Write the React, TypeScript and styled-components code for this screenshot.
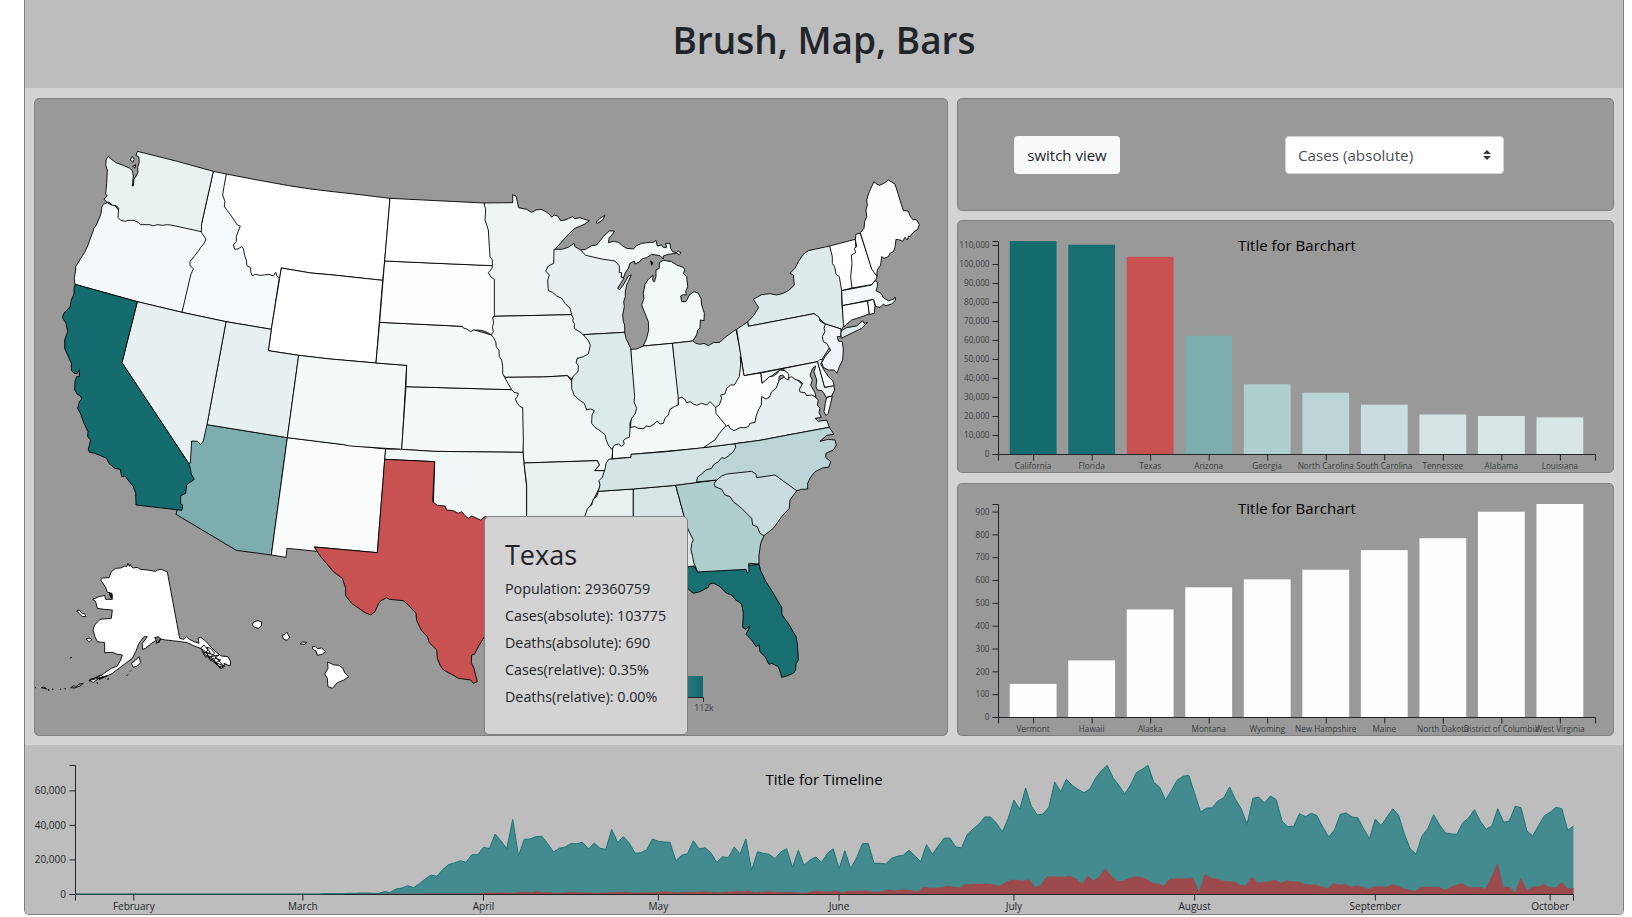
import React from 'react';
import styled, { createGlobalStyle } from 'styled-components';

const GlobalStyle = createGlobalStyle`
  * { box-sizing: border-box; }
  body {
    margin: 0;
    background: #fff;
    color: #212529;
    font-family: 'Open Sans', 'Noto Sans', sans-serif;
    font-size: 15px;
    overflow: hidden;
  }
  svg { display: block; }
`;

const Page = styled.div`
  width: 1600px;
  height: 915px;
  margin-left: 24px;
  display: flex;
  flex-direction: column;
  background: #d3d3d3;
  border: 1px solid #808080;
  border-top: 0;
  border-radius: 0 0 5px 5px;
  overflow: hidden;
`;

const Header = styled.header`
  height: 88px;
  flex: none;
  display: flex;
  justify-content: center;
  background: #bdbdbd;
`;

const Heading = styled.h1`
  margin: 14px 0 0;
  font-size: 37px;
  line-height: 52px;
  font-weight: 600;
  white-space: nowrap;
`;

const Main = styled.main`
  height: 657px;
  flex: none;
  display: grid;
  grid-template-columns: 914px 657px;
  column-gap: 9px;
  padding: 10px 9px 9px;
`;

const Column = styled.div`
  display: grid;
  grid-template-rows: 112px 253px 253px;
  row-gap: 10px;
`;

const Panel = styled.section`
  position: relative;
  background: #999;
  border: 1px solid #808080;
  border-radius: 5px;
`;

const Controls = styled(Panel)`
  display: flex;
  align-items: center;
  justify-content: space-between;
  margin-bottom: -1px;
  padding: 1px 109px 0 56px;
`;

const SwitchButton = styled.button`
  width: 106px;
  height: 38px;
  border: 0;
  border-radius: 4px;
  background: #f8f9fa;
  color: #212529;
  font: 400 15px 'Open Sans', sans-serif;
  padding: 0 0 1px;
  white-space: nowrap;
`;

const SelectBox = styled.div`
  width: 219px;
  height: 38px;
  display: flex;
  align-items: center;
  justify-content: space-between;
  padding: 0 12px 1px;
  border: 1px solid #ced4da;
  border-radius: 4px;
  background: #fff;
  color: #495057;
  font-size: 15.2px;
  white-space: nowrap;
`;

const Tooltip = styled.aside`
  position: absolute;
  left: 449px;
  top: 417px;
  width: 204px;
  height: 219px;
  padding: 21px 20px;
  background: #d3d3d3;
  border: 1px solid #808080;
  border-radius: 5px;
  white-space: nowrap;
`;

const TooltipTitle = styled.h3`
  margin: 0 0 3px;
  font-size: 27px;
  line-height: 34px;
  font-weight: 400;
`;

const TooltipLine = styled.p`
  margin: 0;
  font-size: 14.3px;
  line-height: 27px;
`;

const Timeline = styled.section`
  flex: 1;
  background: #bdbdbd;
`;

const ChartTitle = styled.text`
  font-size: 15px;
  fill: #000;
  text-anchor: middle;
`;

const TickLabel = styled.text<{ $size?: number; $end?: boolean; $dark?: boolean }>`
  font-size: ${p => p.$size ?? 8.2}px;
  text-anchor: ${p => (p.$end ? 'end' : 'middle')};
  fill: ${p => (p.$dark ? '#212529' : '#3b3f43')};
`;

const Axis = styled.path`
  fill: none;
  stroke: #212529;
  stroke-width: 1;
`;

const State = styled.path`
  stroke: #000;
  stroke-width: 2.7;
  stroke-linejoin: round;
`;

/* ---- map geometry: every outline is a list of runs on local map sheets ---- */

type Sheet = [number, number];
type Run = [Sheet, string];
type Shape = [string, ...Run[]];

const NW: Sheet = [0, 0];
const SW: Sheet = [0, 750];
const AK: Sheet = [0, 1350];
const N: Sheet = [918, 270];
const S: Sheet = [828, 990];
const LK: Sheet = [1488, 300];
const NE: Sheet = [1968, 210];
const SE: Sheet = [1608, 930];

const outline = (runs: Run[]) =>
  'M' +
  runs
    .map(([[ox, oy], pts]) =>
      pts
        .split(' ')
        .map(p => {
          const [x, y] = p.split(',').map(Number);
          return `${x + ox},${y + oy}`;
        })
        .join('L'),
    )
    .join('L') +
  'Z';

const states: Shape[] = [
  // Idaho, Oregon, Washington
  ['#f7fafc', [NW, '568,244 607,252 650,330 700,530 768,550 766,563 742,718 606,695 474,667 480,560 488,500 520,440 533,400']],
  ['#f6f9fb', [NW, '238,343 250,338 262,345 270,342 290,370 530,420 534,430 546,447 541,459 530,472 524,482 512,497 498,515 498,527 508,536 500,555 474,667 340,635 153,583 151,565 155,540 155,530 163,517 182,487 191,468 200,443 210,415 217,405 230,375 234,350']],
  ['#e9f2f1', [NW, '340,184 460,214 568,244 533,400 532,425 440,405 430,404 415,406 402,404 388,407 375,404 349,404 343,397 330,391 312,391 304,394 290,391 282,382 284,355 277,347 265,346 258,338 246,335 240,327 250,318 245,312 248,280 250,240 245,225 247,207 254,199 262,208 278,219 298,226 316,234 325,242 328,258 325,288 328,287 330,268 336,258 342,247 341,232 346,215 344,200 336,197']],
  ['#e9f2f1', [NW, '325,199 331,208 326,217 319,210']],
  ['#e9f2f1', [NW, '326,229 335,224 333,235']],
  // Montana, Wyoming
  ['#fff', [NW, '607,252 700,270 800,288 860,297'], [N, '0,34 90,44 180,55 164,243 158,301 0,284'], [NW, '860,549 772,534 767,565 759,558 755,547 748,558 735,553 722,555 708,556 695,553 684,557 680,545 680,533 669,527 667,510 662,497 658,475 652,470 642,477 632,478 628,465 637,455 637,440 642,425 649,408 640,405 630,390 620,375 610,362 601,350 603,335 596,315 600,290']],
  ['#fff', [NW, '772,534 860,549'], [N, '0,284 158,301 138,549 0,537'], [SW, '824,46 733,32'], [NW, '742,718']],
  // Arizona, Utah, Nevada, California
  ['#7eadaf', [SW, '549,254 790,293 742,645 637,631 456,523 460,508 470,500 460,460 480,380 495,295']],
  ['#e7f0f1', [NW, '606,695 742,718'], [SW, '733,32 824,46 790,293 549,254']],
  ['#e7eff0', [NW, '340,635 474,667 606,695'], [SW, '549,254 538,303 530,314 520,304 503,303 499,370 494,370 294,68']],
  ['#146c6f', [NW, '153,583 340,635'], [SW, '294,68 494,370 499,385 502,403 511,418 498,427 488,435 485,460 470,467 470,492 476,495 474,511 336,495 335,460 328,440 316,425 303,408 293,410 289,388 272,385 255,370 248,355 230,347 212,340 196,336 193,328 200,300 191,290 192,275 180,250 170,222 161,205 166,185 173,177 170,168 160,163 152,150 153,125 158,110 166,110 166,90 160,100 150,100 142,90 142,70 133,50 122,25 122,0'], [NW, '124,745 131,725 126,700 115,682 120,670 138,650 142,630 150,612 150,595']],
  // New Mexico, Colorado
  ['#fafcfb', [SW, '790,293 960,314'], [S, '257,87 232,398 43,381 52,394'], [SW, '789,625 786,652 742,645']],
  ['#f4f9fa', [SW, '824,46'], [N, '0,537 138,549 230,556 217,780'], [S, '305,88 257,85 150,78'], [SW, '960,314 790,293']],
  // Minnesota, Iowa, Missouri
  ['#eef4f4', [N, '462,69 548,68 548,44 558,48 562,65 566,83 590,88 605,97 618,90 633,88 648,95 660,105 665,112 672,105 683,108 692,122 705,120 715,116 727,110 735,116 750,113 765,118 778,122 765,132 735,145 715,163 676,207 680,300 730,404 489,409 480,409 465,280 475,200 455,100']],
  ['#f0f5f6', [N, '489,409 724,404 790,470 770,580 727,598 712,587 640,591 524,592 500,560 480,465']],
  ['#f0f5f6', [N, '524,592 640,591 712,587 722,600 770,610 830,710'], [S, '940,80 935,120 914,152 884,152 898,135 892,122 672,129 669,97'], [N, '575,700 550,655 530,610']],
  // Kansas, Nebraska, Dakotas
  ['#f5f9fa', [N, '228,620 545,629 552,637 565,640 562,650 556,657 562,670 570,680 578,683 580,780'], [S, '669,97 400,94 305,88']],
  ['#f5f9fa', [N, '149,427 397,439 484,465 490,472 497,485 499,500 507,512 508,530 515,540 518,560 518,580 524,592 535,612 545,629 228,620 230,556 138,549']],
  ['#fdfefe', [N, '164,243 487,257 486,265 475,278 482,290 493,298 493,409 488,412 491,430 487,440 490,455 484,465 472,457 455,451 430,450 422,455 410,447 400,444 397,439 149,427']],
  ['#fff', [N, '180,55 320,62 462,69 467,90 465,120 475,150 478,200 480,230 487,240 487,257 320,250 164,243']],
  // Michigan and Wisconsin
  ['#f2f7f8', [LK, '182,180 197,178 215,167 230,165 250,140 268,123 283,123 276,135 268,142 265,158 280,154 296,157 308,168 320,175 340,177 350,167 365,160 390,157 400,157 408,151 412,168 425,165 430,172 440,172 437,160 450,160 452,175 458,185 470,188 475,183 483,188 478,194 470,190 445,193 430,198 430,207 420,197 395,193 380,203 365,207 360,215 345,222 343,213 330,220 325,235 315,250 310,265 290,255 270,225 190,200']],
  ['#f2f7f8', [LK, '370,468 457,460 518,453 530,435 533,420 540,415 541,390 552,392 553,370 545,345 543,325 535,310 522,305 508,315 498,335 485,335 482,318 490,314 499,315 497,305 503,290 500,260 490,250 495,240 490,232 470,225 455,215 430,211 418,218 418,235 408,240 408,260 403,276 398,270 399,255 385,268 375,283 370,310 372,325 365,345 375,370 385,395 386,420 380,445']],
  ['#eee', [LK, '228,97 240,85 254,76 250,88 233,100']],
  ['#222', [LK, '392,213 398,218 395,226']],
  ['#e7eff0', [LK, '182,180 197,196 245,207 285,213 298,228 298,248 305,248 304,262 312,265 302,280 293,295 299,299 310,285 325,258 334,255 325,275 320,285 316,305 316,320 311,335 313,350 308,375 310,395 314,405 314,427 190,434 183,428 163,415 163,400 158,393 160,385 155,374 150,355 135,340 125,325 110,318 98,307 85,302 83,270 88,255 77,243 85,228 101,220 102,178 125,178 145,172 162,160 165,170']],
  // Oklahoma, Arkansas
  ['#f0f5f6', [S, '257,87 305,88 400,94 669,97 672,129 680,200 680,320 560,320 400,260 404,125 254,118']],
  ['#e8f0f0', [S, '672,129 892,122 898,135 884,152 916,152 900,200 855,290 855,330 680,330 680,195']],
  // Ohio valley
  ['#deebea', [LK, '457,460 518,453 528,460 540,463 552,460 565,467 580,458 600,457 615,442 648,418 664,500 668,560 630,620 590,665 475,650']],
  ['#eef5f5', [LK, '332,478 350,477 370,468 457,460 475,625 475,660 430,715 330,730 340,600']],
  ['#f5f9fa', [LK, '277,806 278,770 290,755 330,712 345,710 355,715 372,716 378,708 390,710 402,702 412,693 420,702 430,700 435,685 445,675 450,658 463,650 475,645 475,625 485,622 495,628 500,638 510,635 520,642 530,646 545,640 560,645 570,635 580,645 590,655 605,680 635,705 610,730 590,750 570,768 550,774 334,793 334,802']],
  ['#dceae9', [LK, '190,434 314,427 318,445 332,475 344,620 342,635 350,655 345,672 335,685 330,700 330,720 328,742 318,745 310,752 313,762 305,769 295,762 284,765 275,778 265,765 258,748 256,735 240,722 225,712 215,700 216,675 223,662 212,657 200,660 193,640 178,630 162,615 155,595 155,570 160,558 174,545 175,528 169,518 171,505 190,500 205,492 211,465 205,452']],
  // South
  ['#e8f0f0', [SE, '115,274 220,267 220,400 80,400 75,347 83,325 95,315 100,297 110,290']],
  ['#d7e6e5', [SE, '220,267 347,256 372,347 410,430 405,516 340,520 220,520']],
  ['#d5e4e4', [SE, '146,178 213,172 213,163 320,155 430,143 525,131 545,150 440,245 347,256 220,267 115,274 120,255 117,242 127,232 130,222 135,208 138,190']],
  ['#187073', [SE, '340,505 402,498 413,516 540,500 597,492 602,512 618,545 640,580 665,622 666,645 685,670 708,710 712,730 715,780 708,792 707,810 700,820 680,828 665,832 662,820 655,800 635,790 627,793 615,770 600,755 597,735 588,740 575,720 558,703 565,690 570,677 557,688 548,682 550,640 545,612 525,598 515,585 500,580 480,560 460,549 448,553 445,562 420,575 400,580 384,566 300,560']],
  ['#b1cece', [SE, '347,256 470,240 560,300 612,407 602,430 597,465 597,492 566,490 567,515 562,519 558,508 413,516 402,490 398,470 393,450 395,430 400,420 385,390 372,347']],
  // Atlantic coast
  ['#e7eff0', [SE, '430,143 525,131 600,121 700,102 808,82'], [NE, '440,780 415,784 405,775 424,772 417,758 420,745 412,735 415,720 405,710 385,690 330,640 250,690 200,780 140,795 118,820 105,840']],
  ['#f2f7f8', [NE, '440,712 457,708 452,730 445,760 438,767 432,755 436,730']],
  ['#deebea', [NE, '203,486 222,465 236,443 228,430 220,418 245,404 270,401 290,405 310,400 328,390 343,375 340,345 330,340 345,325 355,305 370,283 385,272 449,258 490,330 485,395 486,437 492,495 488,503 484,510 483,507 436,492 402,461 205,499']],
  ['#deebea', [NE, '484,512 500,503 530,498 548,482 552,490 563,487 545,505 510,522 484,535 482,520']],
  ['#e7eff0', [NE, '170,508 203,486 205,499 402,461 417,471 420,483 436,492 450,560 425,600 413,605 192,647']],
  ['#f0f4f8', [NE, '436,492 483,507 482,530 472,530 475,543 487,545 490,570 488,600 478,620 471,640 462,630 445,630 430,622 425,608 435,590 452,570 440,550 430,545 427,530 435,515 432,505']],
  ['#eef4f4', [NE, '242,639 413,605 434,682 462,677 464,690 455,708 438,712 432,700 425,692 412,690 408,680 410,660 402,635 407,618 398,625 390,645 397,660 392,675 405,698 408,712 395,705 380,707 375,698 360,696 358,688 368,670 358,662 345,658 335,650 325,655 310,625 292,635 246,670']],
  ['#fdfefe', [NE, '413,605 420,598 428,600 422,612 432,630 445,650 458,662 463,677 434,682']],
  ['#fdfefe', [NE, '181,590 184,600 192,647 242,639 246,670 258,660 268,650 280,648 292,640 300,630 315,632 326,642 326,660 318,657 308,645 298,648 296,665 288,685 275,695 268,712 258,717 245,710 244,735 235,750 228,770 225,787 210,790 205,800 195,803 180,803 162,812 150,805 145,795 140,799 120,775 108,760 107,742 118,735 125,715 122,705 135,702 140,685 152,675 163,675 178,650 182,615']],
  ['#fff', [NE, '449,258 526,238 530,300 516,384 485,392 478,350 468,342 464,320 457,310 457,290']],
  ['#fff', [NE, '526,238 528,222 541,220 575,325 592,345 588,358 575,374 516,384 512,350 516,310 514,285 527,278 523,265 530,260']],
  ['#fdfefe', [NE, '541,218 552,205 554,185 560,170 558,150 562,135 560,120 568,95 582,65 590,72 598,76 612,70 625,60 645,72 670,152 685,153 690,168 700,180 708,178 718,193 713,208 700,217 690,230 686,228 682,240 675,232 668,244 660,240 648,238 645,262 640,275 630,280 625,290 612,295 605,290 602,315 592,330 590,348 575,327']],
  ['#f4f8fa', [NE, '485,392 575,375 585,362 592,365 592,380 588,392 603,400 610,413 625,422 640,418 645,411 647,420 635,432 618,437 610,433 600,442 588,440 580,418 487,437']],
  ['#fdfefe', [NE, '487,437 563,423 568,462 540,472 515,480 492,500 490,490']],
  ['#fdfefe', [NE, '563,423 580,418 585,437 583,460 568,463']],
  ['#bbd5d6', [SE, '410,246 412,232 425,222 438,210 455,205 460,195 475,185 485,173 495,175 505,168 520,155 527,143 525,131 600,121 700,102 808,82 822,103 800,106 780,124 805,118 825,120 829,135 820,150 798,160 797,172 812,185 806,202 790,203 765,215 750,235 743,250 743,267 725,268 710,272 640,290 470,250 470,240']],
  ['#cadcdf', [SE, '470,240 485,228 500,222 575,214 588,222 590,233 645,225 710,272 690,300 688,325 665,350 640,385 612,407 600,400 592,380 578,375 575,355 545,325 520,305 510,290 495,285 485,268 465,260 463,250']],
  // Texas
  ['#c85151', [S, '254,118 404,125 398,245 412,256 435,258 440,270 460,272 475,280 485,275 495,287 505,295 515,288 535,297 542,300 555,290 600,300 600,600 552,652 535,680 523,703 515,705 514,728 522,745 532,785 520,790 512,780 475,775 455,763 430,750 420,735 412,715 410,690 400,680 388,668 382,650 365,632 350,602 348,580 325,555 310,542 268,538 260,533 243,542 235,552 225,575 212,585 195,578 155,550 137,527 137,505 127,475 100,455 75,425 62,410 43,381 232,398']],
  // Alaska
  ['#fff', [AK, '230,120 235,114 255,113 262,95 275,85 290,84 303,78 308,80 312,70 316,79 319,73 322,80 328,84 340,82 350,88 370,90 395,94 400,90 412,88 430,96 467,295 480,298 487,290 496,298 510,305 525,310 522,295 530,292 545,303 560,320 575,335 592,348 612,350 620,365 618,378 600,370 602,380 590,386 575,370 560,350 545,345 530,325 510,318 490,308 470,305 445,302 425,300 410,297 405,308 395,302 380,312 365,325 355,328 355,310 370,290 360,290 345,310 335,335 325,355 305,370 285,385 265,400 245,410 225,415 208,427 195,422 200,417 222,412 240,400 262,385 280,378 290,360 295,345 280,343 265,337 242,338 242,308 220,305 213,290 207,270 212,255 228,238 262,235 265,210 240,208 220,205 215,185 206,178 225,170 242,166 245,178 265,178 264,160 250,157 245,142']],
  ['#fff', [AK, '158,213 166,210 172,218 183,223 186,229 175,230']],
  ['#fff', [AK, '186,297 198,294 204,299 196,306']],
  ['#fff', [AK, '322,370 333,362 345,350 350,368 340,378 328,382']],
  ['#777', [AK, '392,293 402,290 410,296 404,306 397,310 398,302']],
  ['none', [AK, '530,325 540,315 552,330 545,338 560,340 548,322 560,325 572,340 560,350 585,345 572,355 590,360 575,368 600,378 585,380 560,358 545,335']],
  ['none', [AK, '535,335 545,352 552,350 560,362 568,355 580,375 592,385 598,378 570,345']],
  ['#222', [AK, '256,157 265,166 262,175 258,168']],
  ['none', [AK, '195,422 220,410 230,405 240,412 225,418 250,407']],
  ['none', [AK, '140,443 150,437 155,441 165,432 178,430 168,438 152,444']],
  ['none', [AK, '52,443 60,441 68,447']],
  ['#222', [AK, '72,449 75,448 74,452']],
  ['#222', [AK, '84,448 88,448']],
  ['#222', [AK, '109,448 111,447']],
  ['#222', [AK, '122,446 125,446']],
  ['#222', [AK, '33,443 35,443']],
  ['#222', [AK, '139,354 143,352']],
  ['#222', [AK, '308,407 311,404']],
  ['#222', [AK, '319,394 321,392']],
  ['#222', [AK, '218,428 221,430']],
  ['#222', [AK, '250,418 255,416']],
  // Hawaii
  ['#fff', [AK, '685,254 690,245 702,242 713,246 712,258 703,265 690,261']],
  ['#fff', [AK, '774,286 782,284 789,277 797,293 789,301 779,298']],
  ['#fff', [AK, '829,312 835,306 848,307 843,313']],
  ['#fff', [AK, '865,320 873,319 880,326 893,324 905,335 895,343 880,346 876,333 867,328']],
  ['#fff', [AK, '911,366 930,375 945,376 957,385 962,398 974,410 960,420 940,428 925,445 912,440 910,415 902,402 912,385']],
];

const StateMap = () => (
  <svg width="912" height="636">
    <defs>
      <linearGradient id="scale" x1="0" x2="1">
        <stop offset="0" stopColor="#fff" />
        <stop offset="1" stopColor="#146c6f" />
      </linearGradient>
    </defs>
    <g transform="translate(-11 -9) scale(.33333)">
      {states.map(([fill, ...runs], i) => (
        <State key={i} fill={fill} d={outline(runs)} />
      ))}
    </g>
    <rect x="468" y="577" width="200" height="21" fill="url(#scale)" />
    <Axis d="M468.5 603V598.5H668.5V603" />
    <TickLabel $size={8.6} x="669" y="612">112k</TickLabel>
  </svg>
);

/* ---- bar charts ---- */

interface Bar {
  name: string;
  value: number;
  color?: string;
}

const mostCases: Bar[] = [
  { name: 'California', value: 112105, color: '#146c6f' },
  { name: 'Florida', value: 110150, color: '#187073' },
  { name: 'Texas', value: 103775, color: '#c85151' },
  { name: 'Arizona', value: 62260, color: '#7eadaf' },
  { name: 'Georgia', value: 36700, color: '#b1cece' },
  { name: 'North Carolina', value: 32260, color: '#bbd5d6' },
  { name: 'South Carolina', value: 25950, color: '#cadcdf' },
  { name: 'Tennessee', value: 20800, color: '#d5e4e4' },
  { name: 'Alabama', value: 20000, color: '#d7e6e5' },
  { name: 'Louisiana', value: 19300, color: '#d7e6e5' },
];

const fewestCases: Bar[] = [
  { name: 'Vermont', value: 145 },
  { name: 'Hawaii', value: 248 },
  { name: 'Alaska', value: 471 },
  { name: 'Montana', value: 568 },
  { name: 'Wyoming', value: 603 },
  { name: 'New Hampshire', value: 645 },
  { name: 'Maine', value: 731 },
  { name: 'North Dakota', value: 783 },
  { name: 'District of Columbia', value: 899 },
  { name: 'West Virginia', value: 933 },
];

const BarChart = ({ bars, max, step }: { bars: Bar[]; max: number; step: number }) => {
  const left = 40;
  const width = 597;
  const base = 233;
  const height = 213;
  const band = width / (bars.length + 0.2);
  const ticks = Array.from({ length: Math.floor(max / step) + 1 }, (_, i) => i * step);
  const y = (v: number) => base - (v / max) * height;
  return (
    <svg width="655" height="251">
      {bars.map((b, i) => (
        <rect
          key={b.name}
          x={left + band * (i + 0.2)}
          y={y(b.value)}
          width={band * 0.8}
          height={base - y(b.value)}
          fill={b.color ?? '#fdfefe'}
        />
      ))}
      <Axis d="M34.5 20.5H40.5V233.5H34.5" />
      <Axis d="M40.5 239.5V233.5H637.5V239.5" />
      {ticks.map(t => (
        <g key={t}>
          <Axis d={`M34.5 ${y(t) + 0.5}H40.5`} />
          <TickLabel $end x="31.5" y={y(t) + 3.3}>{t.toLocaleString('en-US')}</TickLabel>
        </g>
      ))}
      {bars.map((b, i) => (
        <g key={b.name}>
          <Axis d={`M${left + 0.5 + band * (i + 0.6)} 233.5V239.5`} />
          <TickLabel x={left + band * (i + 0.6)} y="248">{b.name}</TickLabel>
        </g>
      ))}
      <ChartTitle x="339" y="30">Title for Barchart</ChartTitle>
    </svg>
  );
};

/* ---- timeline: daily chart heights, in thirds of a pixel from the top ---- */

const cases = [
  ...Array(43).fill(462), 461, 461, 461, 461, 460, 460, 459, 459, 460, 460, 455, 457, 447, 444, 437, 443, 431, 417, 405, 409, 389, 374, 369, 362, 367,
  344, 344, 322, 326, 282, 303, 326, 238, 348, 298, 297, 290, 289, 311, 336, 325, 321, 311, 311, 307, 327, 309, 325, 328, 268, 307, 290, 309, 340, 338,
  329, 297, 304, 306, 307, 362, 346, 341, 302, 327, 323, 338, 367, 350, 353, 321, 342, 297, 391, 335, 340, 343, 356, 336, 326, 382, 331, 376, 360, 351,
  367, 340, 326, 386, 332, 386, 353, 311, 310, 370, 370, 372, 355, 349, 346, 331, 347, 365, 314, 343, 318, 295, 294, 320, 324, 283, 267, 252, 231, 231,
  249, 276, 236, 180, 208, 144, 199, 225, 222, 202, 126, 155, 118, 136, 148, 158, 148, 115, 92, 76, 113, 136, 162, 135, 98, 88, 76, 127, 142, 180,
  152, 121, 109, 106, 160, 216, 205, 203, 183, 173, 141, 178, 207, 253, 175, 171, 189, 168, 179, 244, 260, 259, 221, 230, 220, 227, 262, 291, 270, 223,
  219, 231, 233, 267, 296, 237, 257, 231, 206, 226, 283, 327, 342, 288, 266, 224, 254, 278, 282, 283, 248, 234, 209, 243, 268, 258, 206, 247, 243, 199,
  203, 273, 287, 257, 227, 217, 202, 206, 271, 258,
];

const deaths = [
  ...Array(60).fill(462), ...Array(10).fill(461), 459, 459, 459, 458, 459, 460, 457, 456, 458, 454, 458, 457, 460, 459, 458, 457, 458, 458, 459, 460,
  459, 458, 458, 457, 457, 458, 459, 458, 458, 458, 456, 455, 457, 458, 457, 457, 457, 455, 455, 457, 458, 457, 455, 454, 455, 452, 458, 457, 455, 455,
  457, 457, 457, 458, 460, 459, 454, 453, 455, 455, 452, 458, 454, 453, 453, 452, 455, 457, 454, 449, 452, 450, 450, 452, 455, 441, 445, 444, 443, 438,
  441, 444, 434, 433, 432, 432, 432, 434, 439, 427, 420, 421, 423, 419, 443, 435, 410, 410, 411, 411, 408, 417, 433, 408, 423, 410, 386, 409, 424, 424,
  415, 411, 412, 417, 430, 431, 438, 418, 416, 416, 416, 413, 459, 403, 414, 416, 422, 425, 426, 436, 438, 411, 429, 427, 425, 420, 430, 422, 425, 425,
  433, 435, 434, 440, 446, 430, 435, 433, 441, 437, 442, 448, 440, 440, 442, 434, 438, 446, 451, 454, 441, 441, 442, 441, 451, 442, 435, 431, 441, 443,
  442, 448, 411, 371, 444, 440, 460, 414, 452, 441, 440, 433, 443, 443, 427, 447, 444,
];

const series = (values: number[]) => values.map((v, i) => `${(50.5 + (i * 1498) / (values.length - 1)).toFixed(1)},${(v / 3 - 5).toFixed(1)}`).join('L');

const months: [string, number][] = [
  ['February', 10], ['March', 39], ['April', 70], ['May', 100], ['June', 131],
  ['July', 161], ['August', 192], ['September', 223], ['October', 253],
];

const TimelineChart = () => (
  <svg width="1598" height="169">
    <path d={`M50.5,149.5L${series(cases)}L1548.5,149.5Z`} fill="#438b8e" />
    <path d={`M50.5,149.5L${series(deaths)}L1548.5,149.5Z`} fill="#9c4a4c" />
    <path d={`M${series(deaths)}`} fill="none" stroke="#9c4a4c" strokeWidth=".6" />
    <Axis d="M44.5 20.5H50.5V149.5H44.5M50.5 155.5V149.5H1548.5V155.5" />
    <path d={`M${series(cases)}`} fill="none" stroke="#1c7477" />
    {[0, 20000, 40000, 60000].map(t => {
      const y = 149.5 - t * 0.0017267;
      return (
        <g key={t}>
          <Axis d={`M44.5 ${y}H50.5`} />
          <TickLabel $end $dark $size={10} x="41" y={y + 3.5}>{t.toLocaleString('en-US')}</TickLabel>
        </g>
      );
    })}
    {months.map(([name, day]) => {
      const x = 50.5 + (day * 1498) / 257;
      return (
        <g key={name}>
          <Axis d={`M${x} 149.5V155.5`} />
          <TickLabel $dark $size={10} x={x} y="165">{name}</TickLabel>
        </g>
      );
    })}
    <ChartTitle x="799" y="39.5">Title for Timeline</ChartTitle>
  </svg>
);

const facts = [
  'Population: 29360759',
  'Cases(absolute): 103775',
  'Deaths(absolute): 690',
  'Cases(relative): 0.35%',
  'Deaths(relative): 0.00%',
];

export default function App() {
  return (
    <>
      <GlobalStyle />
      <Page>
        <Header>
          <Heading>Brush, Map, Bars</Heading>
        </Header>
        <Main>
          <Panel>
            <StateMap />
            <Tooltip>
              <TooltipTitle>Texas</TooltipTitle>
              {facts.map(f => (
                <TooltipLine key={f}>{f}</TooltipLine>
              ))}
            </Tooltip>
          </Panel>
          <Column>
            <Controls>
              <SwitchButton>switch view</SwitchButton>
              <SelectBox>
                Cases (absolute)
                <svg width="8" height="10" viewBox="0 0 4 5">
                  <path fill="#343a40" d="M2 0L0 2h4zm0 5L0 3h4z" />
                </svg>
              </SelectBox>
            </Controls>
            <Panel>
              <BarChart bars={mostCases} max={112105} step={10000} />
            </Panel>
            <Panel>
              <BarChart bars={fewestCases} max={933} step={100} />
            </Panel>
          </Column>
        </Main>
        <Timeline>
          <TimelineChart />
        </Timeline>
      </Page>
    </>
  );
}
